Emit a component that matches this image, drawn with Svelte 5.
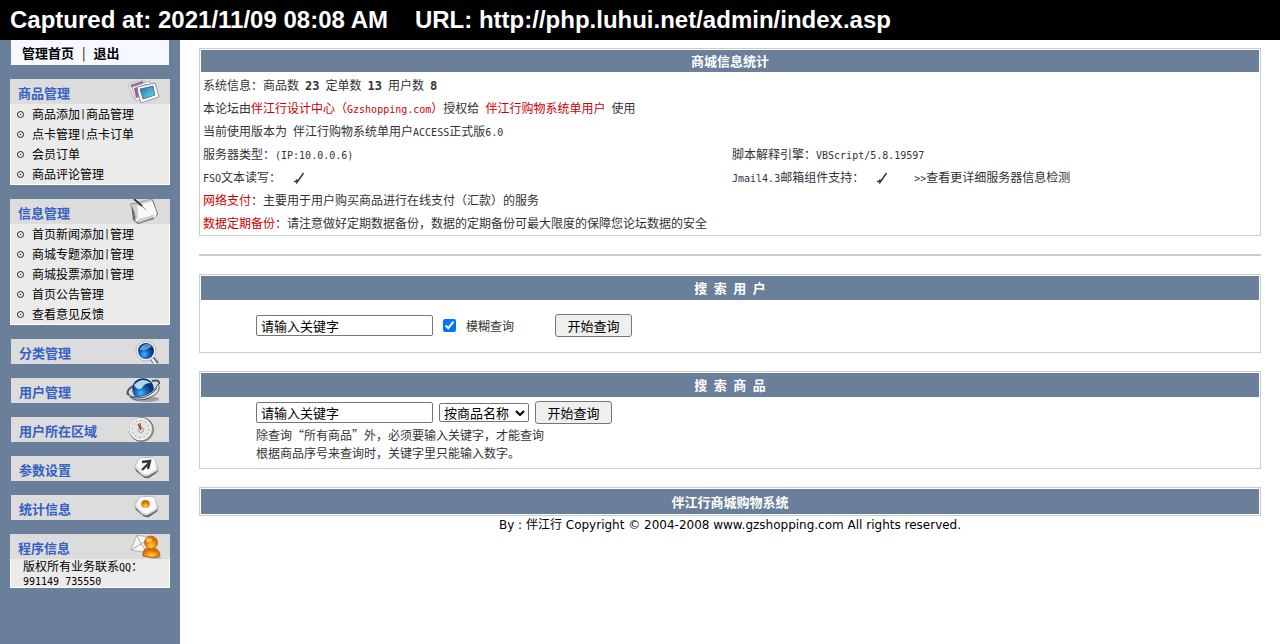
<script>
  const menus = [
    {
      title: '商品管理', icon: 'photos',
      items: [['商品添加', '商品管理'], ['点卡管理', '点卡订单'], ['会员订单'], ['商品评论管理']]
    },
    {
      title: '信息管理', icon: 'note',
      items: [['首页新闻添加', '管理'], ['商城专题添加', '管理'], ['商城投票添加', '管理'], ['首页公告管理'], ['查看意见反馈']]
    },
    { title: '分类管理', icon: 'search' },
    { title: '用户管理', icon: 'globe' },
    { title: '用户所在区域', icon: 'clock' },
    { title: '参数设置', icon: 'arrow' },
    { title: '统计信息', icon: 'dot' },
    { title: '程序信息', icon: 'user', contact: true }
  ];
  let userKey = $state('请输入关键字');
  let goodsKey = $state('请输入关键字');
  let fuzzy = $state(true);
</script>

{#snippet tick()}
  <svg class="tick" viewBox="0 0 12 12" aria-hidden="true"><path d="M1 9.500h2l1-2v3L10.500 1" fill="none" stroke="#434" stroke-width="1.500" /></svg>
{/snippet}

{#snippet icon(name)}
  <svg class="icon" viewBox="0 0 36 25" aria-hidden="true">
    {#if name === 'photos'}
      <path d="M1 5 17 1l5 13-15 6z" fill="#f7f7fa" stroke="#aaa" stroke-width=".7" />
      <path d="M3 6 16 2l3 11-10 4z" fill="url(#violet)" />
      <path d="M5 8 23 2l3 14-17 6z" fill="#f2f3f6" stroke="#999" stroke-width=".6" />
      <path d="M7 9 20 5l2 10-13 4z" fill="#8f63a3" />
      <path d="M10 8 28 4q2 6 4 14l-18 6q-3-8-4-16z" fill="#fff" stroke="#888" stroke-width=".9" />
      <path d="M13 10 26 7l2 9-12 4z" fill="url(#aqua)" stroke="#357" stroke-width=".7" />
    {:else if name === 'note'}
      <path d="M4 5 26 1l5 14-4 5-16 5-5-4z" fill="#666" />
      <path d="M3 5Q9 5 12 3L25 0l5 14q0 3-4 5l-14 5-4-2q1-9-5-17z" fill="#cfd2d3" stroke="#888" stroke-width=".7" />
      <path d="M11 7 25 3l4 11q-9 4-17 5z" fill="#f8f8f8" stroke="#fff" />
      <path d="m12 19-3 3M29 14l-2 5" stroke="#fff" stroke-width="1.500" />
      <path d="m7 0 8 7" stroke="#333" stroke-width="1.800" />
      <path d="m15 7 4 4" stroke="#888" />
    {:else if name === 'search'}
      <path d="m24 17 7 8" stroke="#778" stroke-width="5" />
      <path d="m23 16 7 9" stroke="#fff" stroke-width="2" />
      <circle cx="20" cy="12" r="10" fill="#eef4fa" stroke="#aaa" stroke-width=".8" />
      <circle cx="20" cy="12" r="8" fill="url(#blue)" />
      <path d="M14 11a7 6 0 0 1 12-4q-5 5-12 4z" fill="#9bdcff" opacity=".55" />
    {:else if name === 'globe'}
      <ellipse cx="20" cy="21" rx="13" ry="3" fill="#777" opacity=".6" />
      <path d="M7 8q-7 4-5 9M26 3q8-2 7 3" fill="none" stroke="#555" stroke-width="2" />
      <circle cx="17" cy="11" r="10.800" fill="url(#blue)" />
      <path d="M8 7q8-9 17-2-7 0-9 5-5 3-8-3z" fill="#c9f5ff" opacity=".85" />
      <path d="M2 15q3 6 14 3 12-3 16-12 3 5-2 10-8 6-19 6-8-1-9-7z" fill="#dce3e9" stroke="#444" stroke-width=".8" />
      <path d="M4 19q10 3 19-2 5-3 8-7" fill="none" stroke="#344c62" />
    {:else if name === 'clock'}
      <circle cx="15.500" cy="12.500" r="12" fill="#999" stroke="#777" />
      <circle cx="14.500" cy="12" r="10.800" fill="#e4e4e1" stroke="#fff" />
      <circle cx="14.500" cy="12" r="8.500" fill="none" stroke="#888" stroke-dasharray="1 3.450" />
      <circle cx="15" cy="13" r="2.500" fill="none" stroke="#999" />
      <path d="m15 13-3-6M15 13l-1-7" stroke="#b4332f" stroke-width="1.200" />
    {:else if name === 'arrow' || name === 'dot'}
      <path d="M9 9q0 4 1 6l6 5q3 3 7 2l6-4q4-2 3-7z" fill="#5e6561" />
      <path d="M12 4q1-2 4-2l9-1q3 0 4 3l3 8q0 3-3 4l-7 4q-3 1-6-1l-6-6q-2-2-1-4z" fill="#dcdfdd" stroke="#aaa" stroke-width=".6" />
      <path d="M13 4q1-2 4-2h8q3 0 4 3l1 7q0 2-3 3l-5 3q-3 1-5-1l-5-5q-2-2-1-4z" fill="#fafafa" />
      {#if name === 'arrow'}
        <path d="m16 14 7-7M16 6l8-1-2 8" fill="none" stroke="#333b3b" stroke-width="2.400" />
      {:else}
        <ellipse cx="19.500" cy="9" rx="4.200" ry="4" fill="url(#orange)" />
      {/if}
    {:else if name === 'user'}
      <path d="M10 1 25 4l-3 15L4 16z" fill="#f7f7f7" stroke="#999" stroke-width=".7" />
      <path d="m10 1 4 9 11-6M4 16l10-6 6 8" fill="none" stroke="#aaa" />
      <path d="m23 21 12 3q-6 2-12 0z" fill="#888" opacity=".6" />
      <path d="M16 22q-1-7 5-8h6q6 2 6 8-8 3-17 0z" fill="url(#orange)" stroke="#995c00" stroke-width=".8" />
      <circle cx="24" cy="8.500" r="6.500" fill="url(#orange)" stroke="#a56900" stroke-width=".8" />
      <ellipse cx="22" cy="6" rx="3" ry="2" fill="#ffe28b" opacity=".7" />
    {/if}
  </svg>
{/snippet}

<svg class="defs" aria-hidden="true">
  <defs>
    <linearGradient id="violet" x2="1" y2="1"><stop stop-color="#a276b6" /><stop offset="1" stop-color="#613f75" /></linearGradient>
    <linearGradient id="aqua" x2="1" y2="1"><stop stop-color="#236fa9" /><stop offset="1" stop-color="#6de0e7" /></linearGradient>
    <radialGradient id="blue" cx=".4" cy=".7"><stop stop-color="#4cbcff" /><stop offset=".5" stop-color="#176bc2" /><stop offset="1" stop-color="#0a3479" /></radialGradient>
    <radialGradient id="orange" cx=".5" cy=".75"><stop stop-color="#ffd34d" /><stop offset=".55" stop-color="#f39a16" /><stop offset="1" stop-color="#e06b00" /></radialGradient>
  </defs>
</svg>

<header class="capture"><span>Captured at: 2021/11/09 08:08 AM</span><span>URL: http://php.luhui.net/admin/index.asp</span></header>

<div class="page">
  <nav class="side">
    <div class="home"><a href="#home">管理首页</a><span>|</span><a href="#logout">退出</a></div>
    {#each menus as menu}
      <section class="menu" class:plain={!menu.items && !menu.contact}>
        <h2><a href="#menu">{menu.title}</a>{@render icon(menu.icon)}</h2>
        {#if menu.items}
          <ul>
            {#each menu.items as links}
              <li>
                <svg class="bullet" viewBox="0 0 7 7" aria-hidden="true"><circle cx="3.500" cy="3.500" r="3" fill="none" stroke="#222" /><path d="M3 3h1v1H3z" /></svg>
                {#each links as text, i}{#if i}<span class="en">|</span>{/if}<a href="#item">{text}</a>{/each}
              </li>
            {/each}
          </ul>
        {:else if menu.contact}
          <p>版权所有业务联系<span class="en">QQ</span>：<br /><span class="en">991149 735550</span></p>
        {/if}
      </section>
    {/each}
  </nav>

  <main>
    <section class="panel stats">
      <h1>商城信息统计</h1>
      <table>
        <tbody>
          <tr><td colspan="2">系统信息：商品数<span class="en">&nbsp;</span><b>23</b><span class="en">&nbsp;</span>定单数<span class="en">&nbsp;</span><b>13</b><span class="en">&nbsp;</span>用户数<span class="en">&nbsp;</span><b>8</b></td></tr>
          <tr><td colspan="2">本论坛由<em>伴江行设计中心（<span class="en">Gzshopping.com</span>）</em>授权给<span class="en">&nbsp;</span><em>伴江行购物系统单用户</em><span class="en">&nbsp;</span>使用</td></tr>
          <tr><td colspan="2">当前使用版本为<span class="en">&nbsp;</span>伴江行购物系统单用户<span class="en">ACCESS</span>正式版<span class="en">6.0</span></td></tr>
          <tr><td>服务器类型：<span class="en">(IP:10.0.0.6)</span></td><td>脚本解释引擎：<span class="en">VBScript/5.8.19597</span></td></tr>
          <tr>
            <td><span class="en">FSO</span>文本读写：{@render tick()}</td>
            <td><span class="en">Jmail4.3</span>邮箱组件支持：{@render tick()}<a class="detail" href="#server"><span class="en">&gt;&gt;</span>查看更详细服务器信息检测</a></td>
          </tr>
          <tr><td colspan="2"><em>网络支付</em>：主要用于用户购买商品进行在线支付（汇款）的服务</td></tr>
          <tr><td colspan="2"><em>数据定期备份</em>：请注意做好定期数据备份，数据的定期备份可最大限度的保障您论坛数据的安全</td></tr>
        </tbody>
      </table>
    </section>

    <hr />

    <section class="panel">
      <h2>搜&ensp;索&ensp;用&ensp;户</h2>
      <form class="users" onsubmit={(e) => e.preventDefault()}>
        <input type="text" aria-label="搜索用户" bind:value={userKey} />
        <label><input type="checkbox" bind:checked={fuzzy} /><span>模糊查询</span></label>
        <button>开始查询</button>
      </form>
    </section>

    <section class="panel">
      <h2>搜&ensp;索&ensp;商&ensp;品</h2>
      <form class="goods" onsubmit={(e) => e.preventDefault()}>
        <div>
          <input type="text" aria-label="搜索商品" bind:value={goodsKey} />
          <select aria-label="查询方式"><option>按商品名称</option></select>
          <button>开始查询</button>
        </div>
        <p>除查询“所有商品”外，必须要输入关键字，才能查询<br />根据商品序号来查询时，关键字里只能输入数字。</p>
      </form>
    </section>

    <footer>
      <div class="panel"><h2>伴江行商城购物系统</h2></div>
      <p>By : 伴江行 Copyright © 2004-2008 www.gzshopping.com All rights reserved.</p>
    </footer>
  </main>
</div>

<style>
  :global(body) { margin: 0; background: #fff; }
  :global(#app) { display: flex; flex-direction: column; min-height: 100vh; }
  a { color: inherit; text-decoration: none; }
  h1, h2, p, ul { margin: 0; padding: 0; }
  .defs { position: absolute; width: 0; height: 0; }
  .capture {
    display: flex; gap: 27px; padding: 0 10px; background: #000; color: #fff;
    font: bold 24px/40px "Liberation Sans", Arial, sans-serif; white-space: nowrap;
  }
  .page {
    display: flex; flex: 1; color: #333;
    font: 12px/18px "Noto Sans CJK SC", SimSun, sans-serif;
  }
  .en { font-family: "DejaVu Sans Mono", monospace; font-size: 10px; line-height: 1; }

  .side {
    box-sizing: border-box; flex: 0 0 180px; padding: 0 10px 20px;
    display: flex; flex-direction: column; gap: 14px; background: #6a7f9a; color: #000;
  }
  .home {
    display: flex; gap: 8px; margin: 0 1px; padding-left: 11px; background: #f6f8ff;
    font-size: 13px; font-weight: bold; line-height: 25px;
  }
  .home span { font-weight: normal; }
  .menu h2 {
    display: flex; justify-content: space-between; height: 25px; padding: 0 7px 0 8px;
    background: #dcdcdc; color: #3560c4; font-size: 13px; line-height: 28px;
  }
  .menu.plain { margin: 0 1px; }
  .icon { width: 36px; height: 25px; }
  .menu ul, .menu p { border: 1px solid #fff; border-top: 0; background: #ebebeb; }
  .menu ul { list-style: none; }
  .menu li { display: flex; align-items: center; height: 20px; padding-left: 6px; white-space: nowrap; }
  .bullet { width: 7px; height: 7px; margin-right: 8px; }
  .menu p { padding-left: 12px; line-height: 14px; }

  main { flex: 1; min-width: 0; padding: 8px 19px; }
  .panel { padding: 1px; border: 1px solid #ccc; margin-bottom: 18px; }
  .panel h1, .panel h2 {
    background: #6a7f9a; color: #fff; font-size: 13px; line-height: 24px; text-align: center;
  }
  .panel h1 { line-height: 22px; }
  table { width: 100%; margin-top: 1px; border-collapse: collapse; table-layout: fixed; }
  td { height: 23px; padding: 0 2px; line-height: 23px; white-space: nowrap; }
  b { font-family: "DejaVu Sans Mono", monospace; font-size: 12px; line-height: 1; }
  em { color: #c00; font-style: normal; }
  .tick { width: 12px; height: 12px; margin-left: 12px; vertical-align: -2px; }
  .detail { margin-left: 26px; }
  hr { height: 2px; margin: 18px 0; border: 0; background: #ccc; }

  input[type="text"], select, button {
    box-sizing: border-box; border: 1px solid #767676; border-radius: 2px; color: #000;
    font-family: "Noto Sans CJK SC", sans-serif; font-size: 13px; line-height: 17px;
  }
  input[type="text"] { width: 177px; height: 21px; padding: 1px 4px; background: #fff; }
  select {
    width: 90px; height: 19px; padding: 0 0 0 4px; appearance: none;
    background: #fff url("data:image/svg+xml,%3Csvg xmlns='http://www.w3.org/2000/svg' viewBox='0 0 10 6'%3E%3Cpath d='M1 1l4 4 4-4' fill='none' stroke='black' stroke-width='2'/%3E%3C/svg%3E") no-repeat right 3px center / 10px 6px;
  }
  button { width: 77px; height: 23px; padding: 0; border-radius: 3px; background: #efefef; }
  form { padding-left: 55px; }
  .users { display: flex; align-items: center; height: 51px; }
  .users label { display: flex; align-items: center; gap: 10px; margin: 0 41px 0 10px; }
  .users input[type="checkbox"] { width: 13px; height: 13px; margin: 0; }
  .goods { padding-top: 4px; padding-bottom: 5px; }
  .goods div { display: flex; align-items: center; gap: 6px; }
  .goods p { padding-top: 2px; }
  footer .panel { margin-bottom: 0; }
  footer .panel h2 { line-height: 25px; }
  footer p { color: #000; text-align: center; font-family: "DejaVu Sans", Verdana, "Noto Sans CJK SC", sans-serif; }
</style>
